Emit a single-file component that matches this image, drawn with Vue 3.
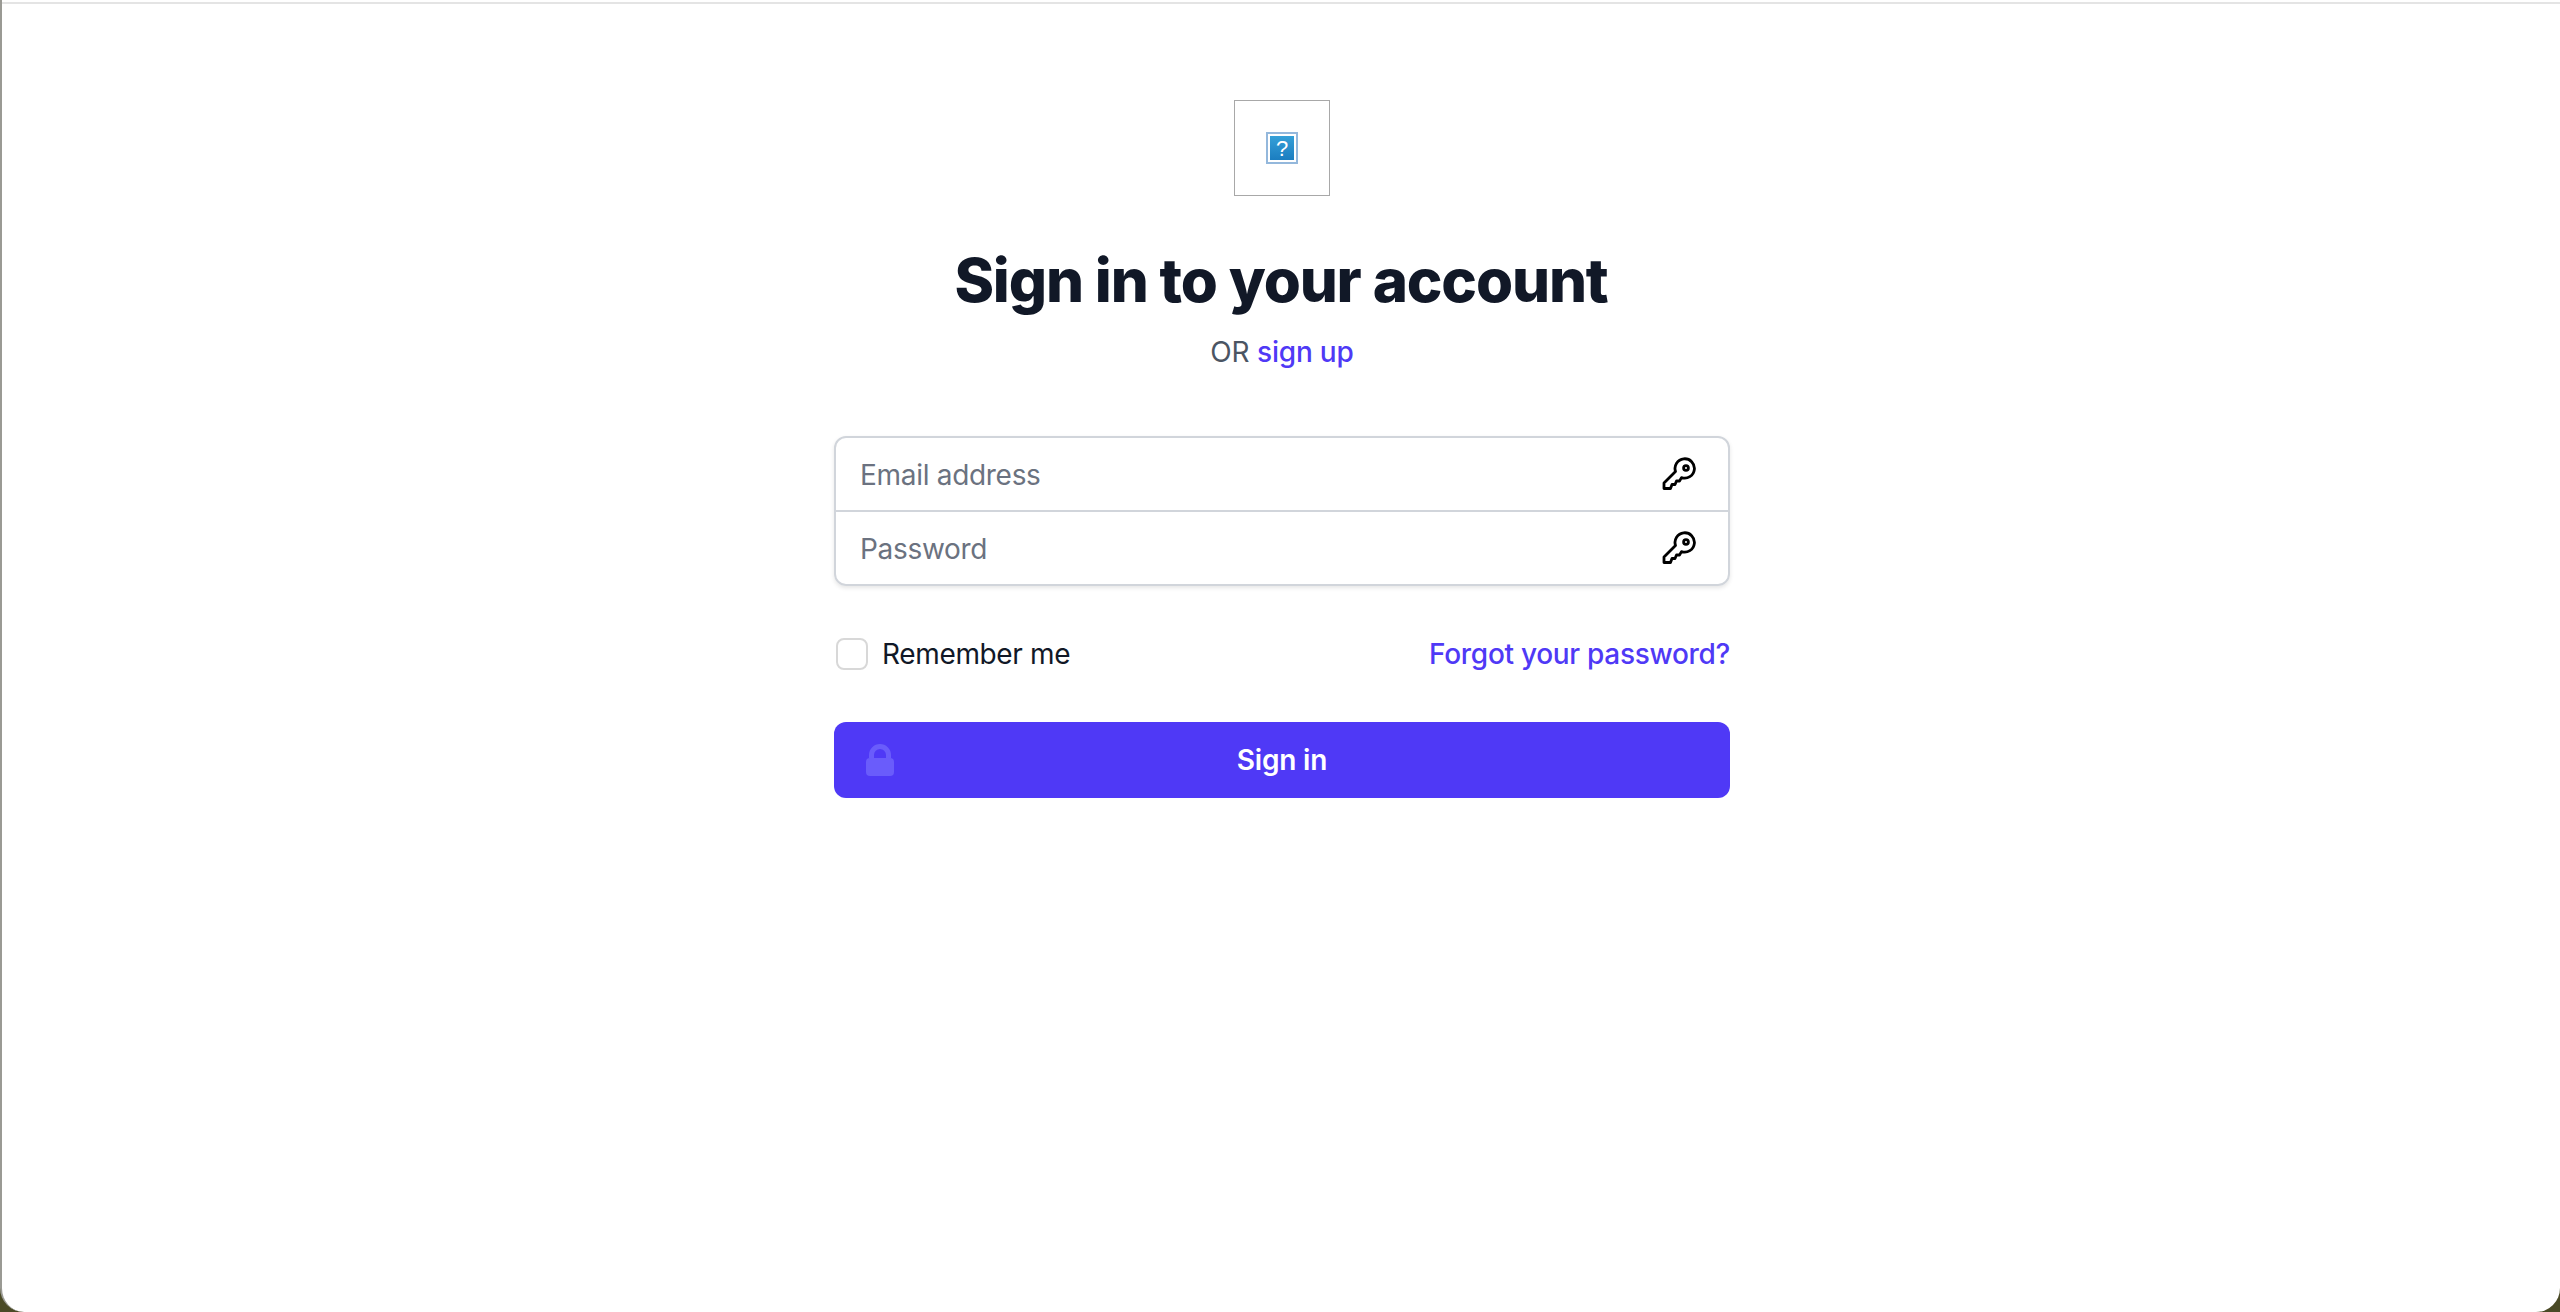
<script setup>
import { ref } from 'vue'

const email = ref('')
const password = ref('')
const remember = ref(false)

// heavy enough to match the outline key in the reference
const keyPath = 'M13.5 14.5 L2 26 V31.5 H8.5 L10 27.5 H13 L14.5 24 H17.5 L19.5 20.6 A9.7 9.7 0 1 0 13.5 14.5 Z'
</script>

<template>
  <div class="frame">
    <div class="page">
      <div class="logo">
        <svg width="32" height="32" viewBox="0 0 32 32">
          <defs>
            <linearGradient id="broken" x1="0" y1="0" x2="0" y2="1">
              <stop offset="0" stop-color="#35a0d8" />
              <stop offset="1" stop-color="#1b7dc0" />
            </linearGradient>
          </defs>
          <rect x="1" y="1" width="30" height="30" fill="#fff" stroke="#94b8dc" stroke-width="2" />
          <rect x="4" y="4" width="24" height="24" fill="url(#broken)" />
          <text x="16" y="24" text-anchor="middle" class="logo-mark">?</text>
        </svg>
      </div>

      <h1>Sign in to your account</h1>
      <p class="sub">OR <a href="#">sign up</a></p>

      <form class="form" @submit.prevent>
        <div class="inputs">
          <div class="row">
            <input v-model="email" type="email" placeholder="Email address" />
            <svg class="key" width="34" height="34" viewBox="0 0 34 34">
              <path :d="keyPath" />
              <circle cx="24" cy="11" r="2.4" />
            </svg>
          </div>
          <div class="row">
            <input v-model="password" type="password" placeholder="Password" />
            <svg class="key" width="34" height="34" viewBox="0 0 34 34">
              <path :d="keyPath" />
              <circle cx="24" cy="11" r="2.4" />
            </svg>
          </div>
        </div>

        <div class="options">
          <label class="remember">
            <input v-model="remember" type="checkbox" />
            <span>Remember me</span>
          </label>
          <a href="#" class="forgot">Forgot your password?</a>
        </div>

        <button type="submit" class="submit">
          <svg class="lock" width="28" height="32" viewBox="0 0 28 32">
            <path d="M3 14 V11 a11 11 0 0 1 22 0 V14 h-5 V11 a6 6 0 0 0 -12 0 V14 Z" />
            <rect x="0" y="14" width="28" height="18" rx="4" />
          </svg>
          Sign in
        </button>
      </form>
    </div>
  </div>
</template>

<style>
html, body {
  margin: 0;
  background: #4a4a26;
}
</style>

<style scoped>
.frame {
  height: 1312px;
  box-sizing: border-box;
  border-left: 2px solid #9a9a94;
  padding-top: 2px;
  border-radius: 0 0 24px 24px;
  background: #fff;
  overflow: hidden;
}

.page {
  display: flex;
  flex-direction: column;
  align-items: center;
  border-top: 2px solid #e4e4e4;
  padding: 96px 0 0 2px;
  font-family: Inter, "Liberation Sans", sans-serif;
  color: #111827;
}

.logo {
  width: 96px;
  height: 96px;
  box-sizing: border-box;
  border: 1px solid #a8a8a8;
  display: flex;
  align-items: center;
  justify-content: center;
}

.logo-mark {
  font-family: "Liberation Sans", sans-serif;
  font-size: 22px;
  font-weight: 400;
  fill: #fff;
}

h1 {
  margin: 48px 2px 0 0;
  font-size: 60px;
  line-height: 72px;
  font-weight: 800;
  letter-spacing: -1.15px;
  color: #111827;
}

.sub {
  margin: 16px 0 0;
  font-size: 28px;
  line-height: 40px;
  letter-spacing: -0.2px;
  color: #4b5563;
}

a {
  color: #4f39f6;
  font-weight: 500;
  text-decoration: none;
}

.form {
  width: 896px;
  margin-top: 64px;
}

.inputs {
  border: 2px solid #d1d5db;
  border-radius: 12px;
  box-shadow: 0 2px 4px rgba(0, 0, 0, 0.1);
}

.row {
  display: flex;
  align-items: center;
  height: 72px;
  padding: 0 32px 0 24px;
}

.row + .row {
  border-top: 2px solid #d1d5db;
}

.row input {
  flex: 1;
  min-width: 0;
  border: none;
  outline: none;
  background: none;
  padding: 1px 0 0;
  font: inherit;
  font-size: 28px;
  letter-spacing: -0.3px;
  color: #111827;
}

.row input::placeholder {
  color: #6b7280;
  opacity: 1;
}

.key path,
.key circle {
  fill: none;
  stroke: #000;
  stroke-width: 2.8;
  stroke-linejoin: round;
}

.options {
  display: flex;
  align-items: center;
  justify-content: space-between;
  margin-top: 48px;
  height: 40px;
  font-size: 28px;
  line-height: 40px;
  letter-spacing: -0.3px;
}

.remember {
  display: flex;
  align-items: center;
  gap: 14px;
  padding-left: 2px;
  color: #111827;
}

.remember span {
  letter-spacing: -0.35px;
}

.remember input {
  appearance: none;
  width: 32px;
  height: 32px;
  margin: 0;
  border: 2px solid #d8d8d8;
  border-radius: 8px;
  background: #fff;
}

.submit {
  position: relative;
  display: block;
  width: 100%;
  height: 76px;
  margin-top: 48px;
  border: none;
  border-radius: 12px;
  background: #4f39f6;
  color: #fff;
  font: inherit;
  font-size: 28px;
  font-weight: 600;
  letter-spacing: -0.2px;
}

.lock {
  position: absolute;
  left: 32px;
  top: 22px;
  fill: #6a5cfb;
}
</style>
